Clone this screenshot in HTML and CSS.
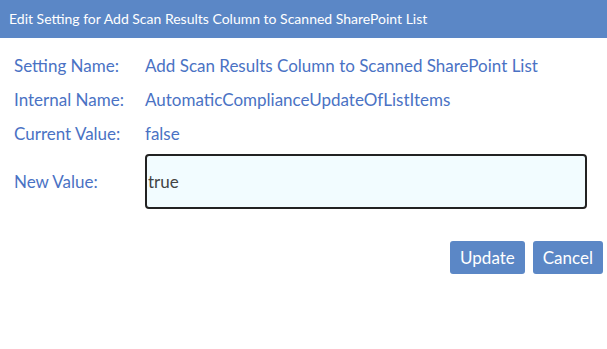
FILE: index.html
```html
<!DOCTYPE html>
<html lang="en">
<head>
    <meta charset="UTF-8">
    <title>Edit Setting</title>
    <link rel="stylesheet" href="styles.css">
</head>
<body>
    <div class="dialog">
        <div class="dialog-title">Edit Setting for Add Scan Results Column to Scanned SharePoint List</div>

        <div class="fields">
            <div class="field-label">Setting Name:</div>
            <div class="field-value">Add Scan Results Column to Scanned SharePoint List</div>

            <div class="field-label">Internal Name:</div>
            <div class="field-value">AutomaticComplianceUpdateOfListItems</div>

            <div class="field-label">Current Value:</div>
            <div class="field-value">false</div>

            <div class="field-label new-label">New Value:</div>
            <div class="field-input">
                <input type="text" class="value-input" value="true" autofocus>
            </div>
        </div>

        <div class="actions">
            <button class="btn">Update</button>
            <button class="btn btn-cancel">Cancel</button>
        </div>
    </div>
</body>
</html>
```

FILE: styles.css
```css
body {
    margin: 0;
    padding: 0;
    background-color: #fff;
    font-family: 'Segoe UI', Lato, sans-serif;
    color: #4a72c4;
}
.dialog-title {
    background-color: #5b87c6;
    color: #fff;
    height: 38px;
    line-height: 37px;
    padding: 0 9px;
    font-size: 14px;
}
.fields {
    display: grid;
    grid-template-columns: 131px 1fr;
    grid-template-rows: 34px 34px 34px 59px;
    padding: 10px 20px 0 14px;
    font-size: 17px;
}
.field-label,
.field-value {
    display: flex;
    align-items: center;
}
.new-label {
    padding-top: 4px;
}
.field-input {
    padding-top: 4px;
}
.value-input {
    box-sizing: border-box;
    width: 100%;
    height: 55px;
    padding: 0 1px;
    border: 2px solid #222;
    border-radius: 4px;
    background-color: #f2fcff;
    font-family: inherit;
    font-size: 17px;
    color: #444;
    outline: none;
}
.actions {
    display: flex;
    justify-content: flex-end;
    gap: 8px;
    padding: 32px 4px 0 0;
}
.btn {
    height: 33px;
    padding: 0 10px;
    border: none;
    border-radius: 3px;
    background-color: #5b87c6;
    color: #fff;
    font-family: inherit;
    font-size: 17px;
}
```
